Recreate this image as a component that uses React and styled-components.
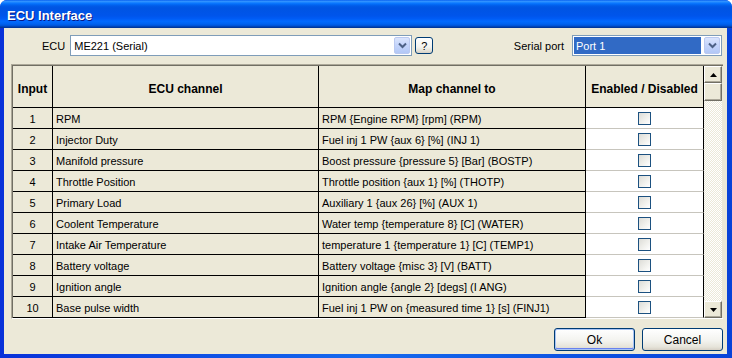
import React from "react";
import styled, { createGlobalStyle } from "styled-components";

const GlobalStyle = createGlobalStyle`
  html, body {
    margin: 0;
    padding: 0;
    background: #ffffff;
  }
  body {
    font-family: "Liberation Sans", Arial, sans-serif;
    font-size: 11px;
    color: #000;
  }
`;

const rows = [
  ["RPM", "RPM {Engine RPM} [rpm] (RPM)"],
  ["Injector Duty", "Fuel inj 1 PW {aux 6} [%] (INJ 1)"],
  ["Manifold pressure", "Boost pressure {pressure 5} [Bar] (BOSTP)"],
  ["Throttle Position", "Throttle position {aux 1} [%] (THOTP)"],
  ["Primary Load", "Auxiliary 1 {aux 26} [%] (AUX 1)"],
  ["Coolent Temperature", "Water temp {temperature 8} [C] (WATER)"],
  ["Intake Air Temperature", "temperature 1 {temperature 1} [C] (TEMP1)"],
  ["Battery voltage", "Battery voltage {misc 3} [V] (BATT)"],
  ["Ignition angle", "Ignition angle {angle 2} [degs] (I ANG)"],
  ["Base pulse width", "Fuel inj 1 PW on {measured time 1} [s] (FINJ1)"],
];

const Window = styled.div`
  width: 732px;
  height: 358px;
  display: flex;
  flex-direction: column;
  background: linear-gradient(90deg, #0831d9 0%, #166aee 50%, #0842d8 100%);
  border-radius: 7px 7px 0 0;
  overflow: hidden;
`;

const TitleBar = styled.div`
  height: 28px;
  flex: none;
  display: flex;
  align-items: center;
  padding-left: 7px;
  background: linear-gradient(
    180deg,
    #0058ee 0%,
    #3593ff 4%,
    #288eff 7%,
    #127dff 10%,
    #036ffc 14%,
    #0262ee 18%,
    #0057e5 24%,
    #0054e3 30%,
    #0055eb 56%,
    #005bf5 66%,
    #026afe 76%,
    #0062ef 86%,
    #0052d6 92%,
    #0040ab 96%,
    #003092 100%
  );
`;

const Title = styled.span`
  font-family: "Liberation Sans", Arial, sans-serif;
  font-weight: bold;
  font-size: 13px;
  color: #fff;
  text-shadow: 1px 1px 0 #0a1883;
  margin-top: 2px;
`;

const Body = styled.div`
  flex: 1;
  margin: 0 5px 4px 4px;
  background: #ece9d8;
  padding: 7px 4px 0 7px;
  display: flex;
  flex-direction: column;
`;

const TopRow = styled.div`
  height: 21px;
  display: flex;
  align-items: center;
`;

const Label = styled.span`
  font-size: 11px;
  margin-left: ${(p) => p.$offset || 0}px;
  margin-right: ${(p) => p.$gap || 0}px;
`;

const Combo = styled.div`
  box-sizing: border-box;
  width: ${(p) => p.$width}px;
  height: 21px;
  border: 1px solid #7f9db9;
  background: #fff;
  display: flex;
  align-items: center;
  padding: 1px;
`;

const ComboText = styled.div`
  flex: 1;
  height: 100%;
  display: flex;
  align-items: center;
  padding-left: 2px;
  font-size: 11px;
  color: ${(p) => (p.$selected ? "#fff" : "#000")};
  background: ${(p) => (p.$selected ? "#316ac5" : "transparent")};
  margin-right: ${(p) => (p.$selected ? 3 : 0)}px;
`;

const DropButton = styled.div`
  box-sizing: border-box;
  width: 16px;
  height: 17px;
  border: 1px solid #bac9f0;
  border-radius: 2px;
  background: linear-gradient(180deg, #dbe5fc 0%, #c5d5fb 45%, #b3c8f6 100%);
  display: flex;
  align-items: center;
  justify-content: center;
`;

const HelpButton = styled.button`
  box-sizing: border-box;
  width: 18px;
  height: 17px;
  margin-left: 3px;
  padding: 0;
  border: 1px solid #003c74;
  border-radius: 3px;
  background: linear-gradient(180deg, #fff 0%, #f3f3ef 60%, #e3e0d6 85%, #d6d0c5 100%);
  font-family: "Liberation Sans", Arial, sans-serif;
  font-size: 11px;
  color: #000;
`;

const Spacer = styled.div`
  flex: ${(p) => (p.$fixed ? `0 0 ${p.$fixed}px` : 1)};
`;

const Frame = styled.div`
  margin-top: 8px;
  border: 1px solid;
  border-color: #aca899 #fff #fff #aca899;
  border-right: none;
  display: flex;
  flex-direction: column;
`;

const Inner = styled.div`
  border-top: 1px solid #716f64;
  border-left: 1px solid #716f64;
  display: flex;
`;

const Grid = styled.div`
  display: grid;
  grid-template-columns: 40px 266px 267px 118px;
  grid-auto-rows: 21px;
  grid-template-rows: 42px;
`;

const Cell = styled.div`
  box-sizing: border-box;
  border-right: 1px solid #000;
  border-bottom: 1px solid ${(p) => (p.$white ? "#c7c5bd" : "#000")};
  background: ${(p) => (p.$white ? "#fff" : "#ece9d8")};
  display: flex;
  align-items: center;
  justify-content: ${(p) => (p.$center ? "center" : "flex-start")};
  padding: 2px 3px 0 3px;
  white-space: nowrap;
  overflow: hidden;
`;

const HeadCell = styled(Cell)`
  font-weight: bold;
  font-size: 12px;
  padding-top: 4px;
  border-bottom-color: #000;
  background: #ece9d8;
`;

const Check = styled.div`
  box-sizing: border-box;
  width: 13px;
  height: 13px;
  margin-top: -1px;
  border: 1px solid #1c5180;
  background: linear-gradient(135deg, #dcdcd7 0%, #f0f0ec 55%, #ffffff 100%);
`;

const Scrollbar = styled.div`
  width: 18px;
  display: flex;
  flex-direction: column;
  background: repeating-conic-gradient(#ece9d8 0 25%, #fff 0 50%) 0 0 / 2px 2px;
`;

const ScrollBtn = styled.div`
  box-sizing: border-box;
  height: ${(p) => p.$h || 17}px;
  background: #ece9d8;
  border-top: 1px solid #fff;
  border-left: 1px solid #fff;
  border-right: 1px solid #716f64;
  border-bottom: 1px solid #716f64;
  box-shadow: inset -1px -1px 0 #aca899;
  display: flex;
  align-items: center;
  justify-content: center;
`;

const Track = styled.div`
  flex: 1;
`;

const ButtonRow = styled.div`
  display: flex;
  justify-content: flex-end;
  gap: 7px;
  margin-top: 9px;
`;

const DialogButton = styled.button`
  box-sizing: border-box;
  width: 81px;
  height: 23px;
  border: 1px solid #003c74;
  border-radius: 3px;
  background: linear-gradient(180deg, #fff 0%, #f3f3ef 55%, #e6e4da 85%, #d6d0c5 100%);
  font-family: "Liberation Sans", Arial, sans-serif;
  font-size: 12px;
  color: #000;
  padding: 0;
  box-shadow: ${(p) =>
    p.$default ? "inset 0 0 0 1px #a8c4f5, inset 0 -1px 0 1px #6982ee" : "none"};
`;

const Chevron = () => (
  <svg width="9" height="7" viewBox="0 0 9 7">
    <path d="M1 1.5 L4.5 5 L8 1.5" fill="none" stroke="#4d6185" strokeWidth="2" />
  </svg>
);

const Arrow = ({ up }) => (
  <svg width="7" height="4" viewBox="0 0 7 4">
    <path d={up ? "M3.5 0 L7 4 L0 4 Z" : "M0 0 L7 0 L3.5 4 Z"} fill="#000" />
  </svg>
);

export default function App() {
  return (
    <>
      <GlobalStyle />
      <Window>
        <TitleBar>
          <Title>ECU Interface</Title>
        </TitleBar>
        <Body>
          <TopRow>
            <Label $offset={31} $gap={5}>ECU</Label>
            <Combo $width={342}>
              <ComboText>ME221 (Serial)</ComboText>
              <DropButton>
                <Chevron />
              </DropButton>
            </Combo>
            <HelpButton>?</HelpButton>
            <Spacer />
            <Label $gap={8}>Serial port</Label>
            <Combo $width={150}>
              <ComboText $selected>Port 1</ComboText>
              <DropButton>
                <Chevron />
              </DropButton>
            </Combo>
            <Spacer $fixed={1} />
          </TopRow>

          <Frame>
            <Inner>
              <Grid>
                <HeadCell $center>Input</HeadCell>
                <HeadCell $center>ECU channel</HeadCell>
                <HeadCell $center>Map channel to</HeadCell>
                <HeadCell $center>Enabled / Disabled</HeadCell>
                {rows.map(([ecu, map], i) => (
                  <React.Fragment key={i}>
                    <Cell $center>{i + 1}</Cell>
                    <Cell>{ecu}</Cell>
                    <Cell>{map}</Cell>
                    <Cell $center $white>
                      <Check />
                    </Cell>
                  </React.Fragment>
                ))}
              </Grid>
              <Scrollbar>
                <ScrollBtn>
                  <Arrow up />
                </ScrollBtn>
                <ScrollBtn $h={18} />
                <Track />
                <ScrollBtn>
                  <Arrow />
                </ScrollBtn>
              </Scrollbar>
            </Inner>
          </Frame>

          <ButtonRow>
            <DialogButton $default>Ok</DialogButton>
            <DialogButton>Cancel</DialogButton>
          </ButtonRow>
        </Body>
      </Window>
    </>
  );
}
